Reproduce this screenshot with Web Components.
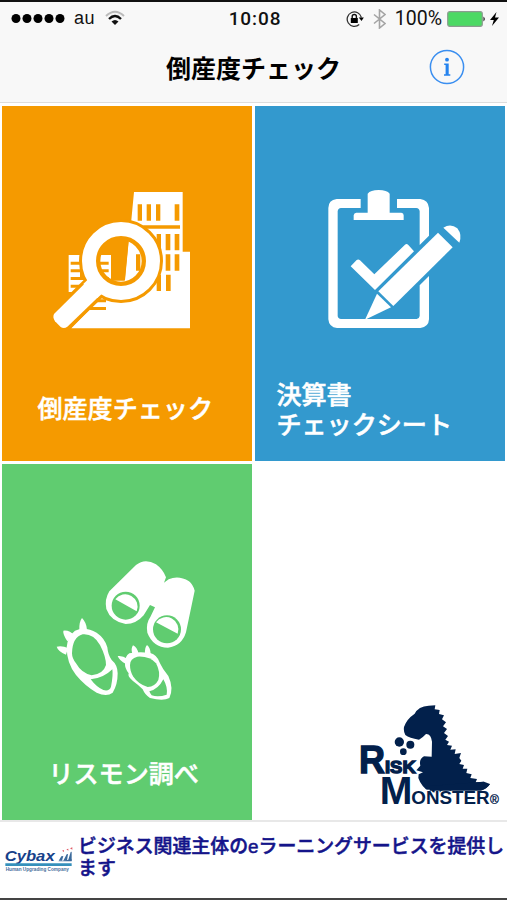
<!DOCTYPE html>
<html lang="ja">
<head>
<meta charset="utf-8">
<title>倒産度チェック</title>
<style>
	body {
		margin: 0;
		background: #fff;
		font-family: "Liberation Sans", "Noto Sans CJK JP", sans-serif;
	}
</style>
</head>
<body>
<app-screen>
	<status-bar slot="top" carrier="au" time="10:08" battery="100%"></status-bar>
	<nav-bar slot="top">倒産度チェック</nav-bar>
	<menu-tile icon="search" style="--color: #f59a00; --icon-x: 37.500px; --label-x: 35px; --gap: 52px">倒産度チェック</menu-tile>
	<menu-tile icon="sheet" style="--color: #3399ce; --icon-x: 59.500px; --label-x: 21px; --gap: 38px">決算書<br>チェックシート</menu-tile>
	<menu-tile icon="monster" style="--color: #60cc70; --icon-x: 42.500px; --label-x: 46px; --gap: 47px">リスモン調べ</menu-tile>
	<risk-logo></risk-logo>
	<ad-banner slot="bottom">ビジネス関連主体のeラーニングサービスを提供します</ad-banner>
</app-screen>

<script>
const icons = {
	search: `<svg width="165" height="160" viewBox="0 0 495 480" fill="#fff">
		<path d="M282 36H428V215H450V445H94L150 388V336H86V225H215V300H255L266 184L274 120Z"/>
		<g fill="#f59a00">
			<path d="M120 220H180V300H120Z"/>
			<path d="M213 180H266L254 302H213Z"/>
			<path d="M293 73h13v49h-13zM320 73h13v49h-13zM348 73h13v49h-13zM404 73h14v49h-14z"/>
			<path d="M310 136H420V146H310Z"/>
			<path d="M350 162h13v49h-13zM377 162h14v49h-14zM404 162h14v49h-14z"/>
			<path d="M288 223h13v49h-13zM350 223h13v49h-13zM377 223h14v49h-14zM404 223h14v49h-14z"/>
			<path d="M350 284h13v49h-13zM378 284h14v49h-14z"/>
			<path d="M92 245h40v9H92zM92 268h40v9H92zM92 291h50v9H92zM92 314h44v9H92z"/>
			<path d="M175 245h31v9h-31zM175 268h31v9h-31zM182 291h24v9h-24z"/>
			<path d="M160 358h38v9h-38zM145 381h53v9h-53z"/>
		</g>
		<path d="M145 300L42 402Q37 412 45 424L62 441Q72 448 82 440L184 342Z" stroke="#f59a00" stroke-width="20" paint-order="stroke"/>
		<circle cx="243" cy="243" r="94" fill="none" stroke="#f59a00" stroke-width="64"/>
		<circle cx="243" cy="243" r="96" fill="none" stroke="#fff" stroke-width="42"/>
		<path d="M146 296L130 312L172 354L188 340Z"/>
	</svg>`,
	sheet: `<svg width="155" height="160" viewBox="0 0 465 480" fill="#fff">
		<path d="M137 57H65Q40 60 40 84V418Q42 442 66 444H316Q341 441 342 418V288L314 316V408Q313 416 305 417H78Q69 416 68 408V94Q69 85 78 84H137ZM246 57H316Q340 60 342 84V167L314 195V94Q313 85 304 84H246Z"/>
		<path d="M158 41Q166 30 191 30Q216 30 224 41V98H259Q266 99 266 106V120H116V106Q117 99 124 98H158Z"/>
		<path d="M107 259L125 240Q130 236 135 241L178 283L270 194Q275 190 280 195L297 214L180 330Z"/>
		<path d="M190 334L369 158L413 202L235 378Z"/>
		<path d="M186 341L228 382L150 419Z"/>
		<path d="M385 143Q407 129 427 145Q442 164 433 188Z"/>
	</svg>`,
	monster: `<svg width="160" height="160" viewBox="0 0 480 480" fill="#fff">
		<path d="M193 124L273 45Q300 23 333 43Q354 58 363 82L357 98L371 88Q401 75 432 94Q444 104 449 122L423 247Q410 289 369 293Q324 292 307 248Q302 220 316 201L330 172L315 165L296 196Q274 222 242 222Q197 214 184 177Q178 148 193 124Z"/>
		<g fill="#60cc70">
			<circle cx="242" cy="167" r="42"/><circle cx="366" cy="238" r="42"/>
		</g>
		<path d="M211 148A37 37 0 0 1 275 184ZM333 217A37 37 0 0 1 398 251Z"/>
		<g transform="translate(15 180)">
			<path d="M88 60Q87 35 96 24Q110 38 111 60ZM52 94Q38 72 40 62Q60 60 72 76ZM48 134Q24 124 20 110Q38 107 54 114ZM228 162Q208 152 203 138Q218 136 232 146ZM247 132Q242 115 249 106Q262 112 265 130ZM285 130Q284 112 291 105Q301 112 302 132Z"/>
			<path d="M50 112Q52 80 75 62Q105 48 140 68Q165 85 172 112Q174 135 185 150Q203 165 203 190Q203 225 188 248Q170 262 140 248Q105 228 78 195Q50 160 50 112Z"/>
			<path d="M225 160Q224 140 238 130Q265 124 298 128Q322 133 330 160Q338 178 355 198Q372 235 358 264Q340 274 300 264Q285 255 278 238Q262 222 248 212Q232 200 236 190Q224 175 225 160Z"/>
			<g fill="#60cc70">
				<path d="M66 130Q67 82 98 73Q130 70 150 105Q168 140 168 165Q160 192 125 196Q95 190 78 160Q66 145 66 130Z"/>
				<path d="M122 208Q160 205 187 178Q190 195 183 230Q178 245 160 240Q140 232 122 208Z"/>
				<path d="M240 165Q240 145 262 140Q300 138 318 160Q332 185 325 210Q315 230 293 231Q265 222 250 200Q240 185 240 165Z"/>
				<path d="M298 244Q325 238 340 208Q354 232 350 254Q325 262 305 256Q300 250 298 244Z"/>
			</g>
		</g>
	</svg>`,
};

class AppScreen extends HTMLElement {
	connectedCallback() {
		this.attachShadow({ mode: "open" }).innerHTML = `
		<style>
			:host {
				display: flex;
				flex-direction: column;
				box-sizing: border-box;
				width: 507px;
				height: 900px;
				border-top: 2px solid #111;
				border-bottom: 2px solid #444;
				overflow: hidden;
			}
			main {
				display: grid;
				grid-template: 355px 356px / 250px 250px;
				gap: 3px;
				padding: 3px 2px 0 2.4px;
				height: 714px;
			}
		</style>
		<slot name="top"></slot>
		<main><slot></slot></main>
		<slot name="bottom"></slot>`;
	}
}

class StatusBar extends HTMLElement {
	connectedCallback() {
		this.attachShadow({ mode: "open" }).innerHTML = `
		<style>
			:host {
				display: grid;
				grid-template-columns: 1fr auto 1fr;
				align-items: center;
				height: 33px;
				padding: 0 8px 0 11px;
				background: #f8f8f8;
				color: #111;
				font: 18px/33px Roboto, "Liberation Sans", sans-serif;
			}
			div { display: flex; align-items: center; }
			svg { display: block; }
			b { font-weight: 500; font-size: 19px; letter-spacing: .9px; }
			.signal { margin-right: 9px; }
			.carrier { margin-right: 10px; font-family: "Liberation Sans"; letter-spacing: .5px; }
			.right { justify-content: flex-end; }
			.percent { margin: 0 5px 0 9px; font-size: 19.5px; }
		</style>
		<div>
			<svg class="signal" width="54" height="10" viewBox="0 0 54 10">
				<circle cx="5" cy="4.500" r="4.500"/><circle cx="16" cy="4.500" r="4.500"/><circle cx="27" cy="4.500" r="4.500"/><circle cx="38" cy="4.500" r="4.500"/><circle cx="49" cy="4.500" r="4.500"/>
			</svg>
			<span class="carrier">${this.getAttribute("carrier")}</span>
			<svg width="20" height="18" viewBox="0 0 20 18" fill="none" stroke-width="2">
				<path d="M1 6Q10-2.500 19 6" stroke="#bbb"/>
				<path d="M4 9Q10 3 16 9" stroke="#111" stroke-width="2.300"/>
				<path d="M6.500 11.500Q10 8.500 13.500 11.500L10 15Z" fill="#111"/>
			</svg>
		</div>
		<b>${this.getAttribute("time")}</b>
		<div class="right">
			<svg width="18" height="18" viewBox="0 0 18 18">
				<path d="M13.200 14.500A7.200 7.200 0 1 1 15.400 7.500" fill="none" stroke="#333" stroke-width="1.300"/>
				<path d="M12.800 7.500H17.800L15.500 11Z"/>
				<path d="M4.800 8H11.800V13H4.800Z"/>
				<path d="M6.200 8.500V6.600A2.100 2.100 0 0 1 10.400 6.600V8.500" fill="none" stroke="#111" stroke-width="1.400"/>
			</svg>
			<svg style="margin-left: 9px" width="13" height="20" viewBox="0 0 13 20" fill="none" stroke="#a4a4a4" stroke-width="1.600">
				<path d="M1 5.500L12 14.500L6.500 19V1L12 5.500L1 14.500"/>
			</svg>
			<span class="percent">${this.getAttribute("battery")}</span>
			<svg width="39" height="16" viewBox="0 0 39 16">
				<rect x=".7" y=".7" width="34.600" height="14.600" rx="2" fill="#4cd964" stroke="#8c9c90" stroke-width="1.200"/>
				<path d="M36.500 5.500Q39 8 36.500 10.500Z"/>
			</svg>
			<svg style="margin-left: 4px" width="9" height="16" viewBox="0 0 9 16">
				<path d="M6.500 1L0 9H3.800L2 15L9 6.500H5Z"/>
			</svg>
		</div>`;
	}
}

class NavBar extends HTMLElement {
	connectedCallback() {
		this.attachShadow({ mode: "open" }).innerHTML = `
		<style>
			:host {
				display: grid;
				grid-template-columns: 1fr auto 1fr;
				align-items: center;
				box-sizing: border-box;
				height: 68px;
				padding-bottom: 3px;
				background: #f8f8f8;
				border-bottom: 1px solid #ddd;
				color: #000;
				font: 700 25px/30px "Noto Sans CJK JP", sans-serif;
			}
			h1 { grid-column: 2; margin: 0; font: inherit; }
			svg { justify-self: end; margin-right: 42.500px; }
		</style>
		<h1><slot></slot></h1>
		<svg width="36" height="36" viewBox="0 0 36 36" fill="#2583ee">
			<circle cx="18" cy="18" r="16.600" fill="none" stroke="#3b8ff0" stroke-width="1.500"/>
			<circle cx="18" cy="10.700" r="1.900"/>
			<path d="M15.200 14.500H19.700V25.300H21.300V26.800H15V25.300H16.600V16H15.200Z"/>
		</svg>`;
	}
}

class MenuTile extends HTMLElement {
	connectedCallback() {
		this.attachShadow({ mode: "open" }).innerHTML = `
		<style>
			:host {
				display: flex;
				flex-direction: column;
				box-sizing: border-box;
				padding-top: 74px;
				background: var(--color);
				color: #fff;
				font: 500 25.100px/30px "Noto Sans CJK JP", sans-serif;
				-webkit-text-stroke: .5px #fff;
			}
			:host([icon="monster"]) { padding-top: 86px; }
			svg { display: block; flex: none; margin-left: var(--icon-x); }
			.label { margin: var(--gap) 0 0 var(--label-x); white-space: nowrap; }
		</style>
		${icons[this.getAttribute("icon")]}
		<div class="label"><slot></slot></div>`;
	}
}

class RiskLogo extends HTMLElement {
	connectedCallback() {
		this.attachShadow({ mode: "open" }).innerHTML = `
		<style>
			:host { display: flex; align-items: flex-end; justify-content: flex-end; }
			svg { flex: none; margin: 0 -1.500px 4px 0; }
			text { font-family: "Liberation Sans", sans-serif; font-weight: 700; }
		</style>
		<svg width="157" height="120" viewBox="0 0 471 360" fill="#02204b">
			<path d="M162 93Q169 70 194 53Q205 31 236 29L256 28L254 40L269 42L267 54L282 58L276 70L288 79L279 91L291 99L282 111L294 120L286 131L297 137L291 147L306 149L301 161L317 160L314 174L333 171L328 186L334 194L328 204L342 207L338 218L352 218L349 231L365 235L361 246L381 249L377 259L402 257L399 264L420 264Q411 278 393 284L360 291L239 289Q213 270 205 246L206 235L219 229L199 223L211 209Q206 190 222 181L245 182L246 137Q243 113 228 114Q217 126 207 131Q178 127 166 117Q160 107 162 93Z"/>
			<circle cx="148" cy="138" r="14"/><circle cx="181" cy="146" r="12"/><circle cx="160" cy="167" r="10"/>
			<g stroke="#02204b" stroke-width="4">
				<text x="27" y="231" font-size="118" textLength="78" lengthAdjust="spacingAndGlyphs">R</text>
				<text x="105" y="230" font-size="52" textLength="92" lengthAdjust="spacingAndGlyphs">ISK</text>
			</g>
			<g stroke="#fff" stroke-width="7" paint-order="stroke">
				<text x="89" y="325" font-size="116" textLength="98" lengthAdjust="spacingAndGlyphs">M</text>
				<text x="184" y="325" font-size="54" textLength="235" lengthAdjust="spacingAndGlyphs">ONSTER</text>
			</g>
			<g stroke="#02204b" stroke-width="3" fill="none">
				<path d="M239 270L402 257L420 264Q411 278 393 284L239 284Z" fill="#02204b" stroke="none"/>
			</g>
			<text x="420" y="324" font-size="36" style="font-weight: 400" stroke="#02204b">®</text>
		</svg>`;
	}
}

class AdBanner extends HTMLElement {
	connectedCallback() {
		this.attachShadow({ mode: "open" }).innerHTML = `
		<style>
			:host {
				display: flex;
				box-sizing: border-box;
				flex: 1;
				padding: 14px 0 0 4px;
				border-top: 2px solid #e8e8e8;
				background: #fff;
				color: #14148a;
				font: 500 18.900px/22px "Liberation Sans", "Noto Sans CJK JP", sans-serif;
				-webkit-text-stroke: .5px #14148a;
			}
			svg { flex: none; margin: 9px 4px 0 0; overflow: visible; -webkit-text-stroke: 0; }
			p { margin: 0; flex: 1; line-break: anywhere; word-break: break-all; }
		</style>
		<svg width="70" height="34" viewBox="0 0 210 102">
			<text x="2" y="48" font-size="43" font-weight="700" font-style="italic" fill="#17418a" textLength="150" lengthAdjust="spacingAndGlyphs">Cybax</text>
			<path d="M4 55H203V63H4Z" fill="#3590bb"/>
			<path d="M164 47L172 34L178 33L174 47ZM178 47L188 28L192 27L189 47ZM192 47L200 21L203 20V47Z" fill="#3b6a9b"/>
			<path d="M160 49Q184 48 203 43V49Z" fill="#3b6a9b"/>
			<path d="M174 17l6-2v6zM187 13l6-2v6zM198 10l7-3v7z" fill="#e05b67"/>
			<text x="5" y="77" font-size="15" font-weight="700" fill="#4a6f9c" textLength="190" lengthAdjust="spacingAndGlyphs">Human Upgrading Company</text>
		</svg>
		<p><slot></slot></p>`;
	}
}

customElements.define("app-screen", AppScreen);
customElements.define("status-bar", StatusBar);
customElements.define("nav-bar", NavBar);
customElements.define("menu-tile", MenuTile);
customElements.define("risk-logo", RiskLogo);
customElements.define("ad-banner", AdBanner);
</script>
</body>
</html>
